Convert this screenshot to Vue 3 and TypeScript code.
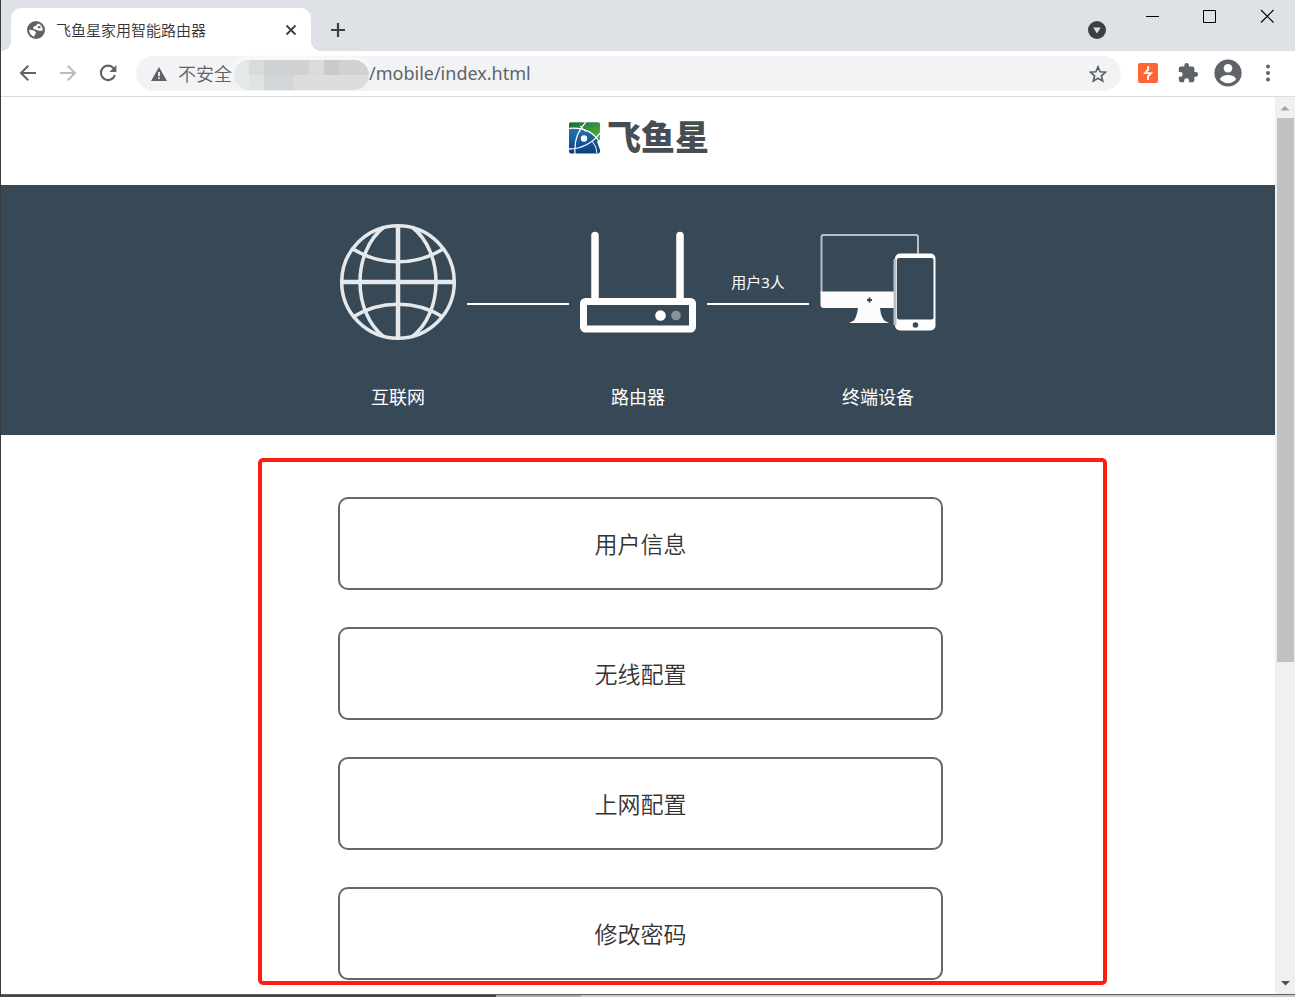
<script setup lang="ts">
import { ref } from 'vue'

const tabTitle = '飞鱼星家用智能路由器'
const address = ref('/mobile/index.html')
const onlineUsers = 3
const menu: string[] = ['用户信息', '无线配置', '上网配置', '修改密码']
</script>

<template>
  <div class="window">
    <header class="tabstrip">
      <div class="tab">
        <svg class="favicon" viewBox="0 0 18 18" aria-hidden="true">
          <circle cx="9" cy="9" r="9" fill="#5f6368" />
          <path d="M11.2 2.4C9.8 3.2 9.6 4.4 8.6 4.9 7.2 5.400 6 5.600 6.200 7.200 6.400 8.600 8.600 8 9.800 9 11.200 10.200 13.600 9.800 15.800 9.400 15.900 6.200 14.200 3.400 11.200 2.400Z" fill="#fff" />
          <path d="M2.200 8.800C4 8.900 6.800 9.200 8.200 10.400 9.800 11.800 8.400 13.200 7.600 13.800L7.400 15.700C4.200 15 2.200 12.200 2.200 8.800Z" fill="#fff" />
          <path d="M10.800 5.200H13.400V7.200H10.800Z" fill="#5f6368" />
        </svg>
        <span class="tab-title">{{ tabTitle }}</span>
        <button class="tab-close" type="button" aria-label="关闭标签页">
          <svg width="12" height="12" viewBox="0 0 12 12"><path d="M1.5 1.5 10.5 10.5M10.5 1.5 1.5 10.5" stroke="#3c4043" stroke-width="1.800" /></svg>
        </button>
      </div>
      <button class="new-tab" type="button" aria-label="新标签页">
        <svg width="16" height="16" viewBox="0 0 16 16"><path d="M8 1V15M1 8H15" stroke="#3c4043" stroke-width="2.2" /></svg>
      </button>
      <button class="tab-search" type="button" aria-label="搜索标签页">
        <svg width="18" height="18" viewBox="0 0 18 18"><circle cx="9" cy="9" r="9" fill="#3c4043" /><path d="M5.2 6.4H12.8L9 12.4Z" fill="#dee1e6" /></svg>
      </button>
      <div class="window-controls">
        <button type="button" aria-label="最小化">
          <svg width="14" height="14" viewBox="0 0 14 14"><path d="M0 7.5H13" stroke="#000" /></svg>
        </button>
        <button type="button" aria-label="最大化">
          <svg width="14" height="14" viewBox="0 0 14 14"><path d="M.5 1.5H12.5V13.5H.5Z" fill="none" stroke="#000" /></svg>
        </button>
        <button type="button" aria-label="关闭">
          <svg width="14" height="14" viewBox="0 0 14 14"><path d="M1 1 13.500 13.500M13.500 1 1 13.500" stroke="#000" stroke-width="1.1" /></svg>
        </button>
      </div>
    </header>

    <nav class="toolbar">
      <button class="tool" type="button" aria-label="后退">
        <svg width="18" height="18" viewBox="0 0 18 18"><path d="M17 9H2.5M9.3 1.8 2 9 9.3 16.2" fill="none" stroke="#5f6368" stroke-width="2" /></svg>
      </button>
      <button class="tool" type="button" aria-label="前进">
        <svg width="18" height="18" viewBox="0 0 18 18"><path d="M1 9H15.5M8.7 1.8 16 9 8.7 16.2" fill="none" stroke="#babcbe" stroke-width="2" /></svg>
      </button>
      <button class="tool" type="button" aria-label="重新加载">
        <svg width="18" height="18" viewBox="0 0 18 18"><path d="M15.9 11.2A7.2 7.2 0 1 1 14.6 4.2" fill="none" stroke="#5f6368" stroke-width="2.1" /><path d="M17.4 1V8H10.4Z" fill="#5f6368" /></svg>
      </button>
      <div class="omnibox">
        <button class="security" type="button">
          <svg width="16" height="14" viewBox="0 0 16 14"><path d="M8 0 16 14H0Z" fill="#5f6368" /><path d="M8 5V9.2M8 10.4V12" stroke="#fff" stroke-width="1.7" /></svg>
          <span>不安全</span>
        </button>
        <span class="redacted" aria-hidden="true"><i v-for="n in 18" :key="n"></i></span>
        <input v-model="address" class="address" type="text" aria-label="地址栏" />
        <button class="star" type="button" aria-label="收藏此页">
          <svg width="18" height="18" viewBox="0 0 18 18"><path d="M9 1.8 11.1 6.8 16.5 7.2 12.4 10.8 13.7 16 9 13.2 4.3 16 5.6 10.8 1.5 7.2 6.9 6.8Z" fill="none" stroke="#5f6368" stroke-width="1.7" /></svg>
        </button>
      </div>
      <div class="extensions">
        <button class="tool" type="button" aria-label="扩展">
          <svg width="22" height="22" viewBox="0 0 22 22"><rect x="1" y="1" width="20" height="20" rx="2" fill="#ff6633" /><path d="M11.200 4V7.400L8 11.200H14L10.900 14.600V18" fill="none" stroke="#fff" stroke-width="1.800" /></svg>
        </button>
        <button class="tool" type="button" aria-label="扩展程序">
          <svg width="22" height="22" viewBox="0 0 24 24"><path d="M20.5 11H19V7a2 2 0 0 0-2-2h-4V3.5a2.5 2.5 0 0 0-5 0V5H4a2 2 0 0 0-2 2v3.8h1.5a2.7 2.7 0 0 1 0 5.4H2V20a2 2 0 0 0 2 2h3.8v-1.5a2.7 2.7 0 0 1 5.4 0V22H17a2 2 0 0 0 2-2v-4h1.500a2.500 2.500 0 0 0 0-5Z" fill="#5f6368" /></svg>
        </button>
        <button class="tool" type="button" aria-label="个人资料">
          <svg width="28" height="28" viewBox="0 0 28 28"><circle cx="14" cy="14" r="13.6" fill="#5f6368" /><circle cx="14" cy="9.200" r="4.300" fill="#fff" /><path d="M5.800 20C7.600 16.900 11.200 16 14 16S20.400 16.900 22.200 20C20.400 22.600 17.400 24.200 14 24.200S7.600 22.600 5.800 20Z" fill="#fff" /></svg>
        </button>
        <button class="tool" type="button" aria-label="菜单">
          <svg width="6" height="18" viewBox="0 0 6 18"><g fill="#5f6368"><circle cx="3" cy="2.500" r="2" /><circle cx="3" cy="9" r="2" /><circle cx="3" cy="15.500" r="2" /></g></svg>
        </button>
      </div>
    </nav>

    <div class="viewport">
      <main class="page">
        <h1 class="brand">
          <svg width="32" height="32" viewBox="0 0 32 32" aria-hidden="true">
            <defs>
              <linearGradient id="sea" x1="0" y1="0" x2="0" y2="1"><stop offset="0" stop-color="#2d7fb4" /><stop offset="1" stop-color="#0a3f82" /></linearGradient>
              <linearGradient id="leaf" x1="0" y1="0" x2="1" y2="1"><stop offset="0" stop-color="#176b37" /><stop offset="1" stop-color="#5cbc40" /></linearGradient>
            </defs>
            <rect width="31" height="31" y="0.500" rx="2" fill="url(#sea)" />
            <path d="M1 .5H29a2 2 0 0 1 2 2V20C26 11 15 5 0 6.500V2Z" fill="url(#leaf)" />
            <path d="M28 19.500 31 18V28Z" fill="#fff" />
            <path d="M0 6.300C14 5 25 10 31 21" fill="none" stroke="#fff" stroke-width="1.300" />
            <path d="M17 0C9 8 5 19 6 32" fill="none" stroke="#fff" stroke-width="1.200" />
            <path d="M0 27C12 27 24 21 31 11" fill="none" stroke="#fff" stroke-width="1.300" />
            <path d="M11 4Q15 7 17 10M23 19Q28 25 28 31" fill="none" stroke="#fff" />
            <circle cx="15" cy="16.500" r="3.200" fill="#fff" />
          </svg>
          <span>飞鱼星</span>
        </h1>

        <section class="banner">
          <figure class="node">
            <svg width="120" height="120" viewBox="0 0 120 120" fill="none" stroke="#e6e9eb" stroke-width="3.500" aria-hidden="true">
              <circle cx="60" cy="60" r="56.300" />
              <path d="M60 3V117M3 60H117" stroke-width="4.500" />
              <path d="M46 5C14 30 14 90 46 115M74 5C106 30 106 90 74 115" />
              <path d="M15 27C42 44 78 44 105 27M15 95C42 78 78 78 105 95" />
            </svg>
            <figcaption>互联网</figcaption>
          </figure>
          <div class="link"></div>
          <figure class="node">
            <svg width="120" height="120" viewBox="0 0 120 120" aria-hidden="true">
              <path d="M17 78V13.500M102 78V13.500" stroke="#fff" stroke-width="7.500" stroke-linecap="round" />
              <rect x="5.500" y="79.500" width="109" height="27.500" rx="2" fill="#374956" stroke="#fff" stroke-width="7" />
              <circle cx="82.500" cy="93.500" r="5.300" fill="#fff" />
              <circle cx="98" cy="93.500" r="4.800" fill="#87929a" />
            </svg>
            <figcaption>路由器</figcaption>
          </figure>
          <div class="link"><span>用户{{ onlineUsers }}人</span></div>
          <figure class="node">
            <svg width="120" height="120" viewBox="0 0 120 120" aria-hidden="true">
              <path d="M3.500 72V15Q3.500 13 5.500 13H98Q100 13 100 15V32" fill="none" stroke="#b8c0c5" stroke-width="2" />
              <path d="M2.500 69.500H78V86H6Q2.500 86 2.500 82.500Z" fill="#fdfbfc" />
              <path d="M40 86H62Q63 96 67 99L71 101H31L36 98.500Q39 94 40 86Z" fill="#fdfbfc" />
              <path d="M49 78H54M51.500 75.500V80.500" stroke="#374956" stroke-width="2" />
              <rect x="77" y="31.500" width="40.500" height="77" rx="5" fill="#fff" />
              <path d="M77 37V103" stroke="#b8c0c5" stroke-width="3" />
              <rect x="79" y="36" width="36.500" height="61.500" rx="2" fill="#374956" />
              <circle cx="97.500" cy="103" r="2.800" fill="#374956" />
            </svg>
            <figcaption>终端设备</figcaption>
          </figure>
        </section>

        <div class="menu">
          <button v-for="item in menu" :key="item" class="menu-item" type="button">{{ item }}</button>
        </div>
      </main>

      <div class="scrollbar" aria-hidden="true">
        <svg width="20" height="20" viewBox="0 0 20 20"><path d="M5.500 13.500H14.500L10 9Z" fill="#a3a3a3" /></svg>
        <div class="rail"><div class="thumb"></div></div>
        <svg width="20" height="20" viewBox="0 0 20 20"><path d="M6 7H15L10.500 11.500Z" fill="#505050" /></svg>
      </div>
      <div class="highlight" aria-hidden="true"></div>
    </div>
    <div class="desktop-edge"></div>
  </div>
</template>

<style>
body {
  margin: 0;
  overflow: hidden;
}
</style>

<style scoped>
.window {
  display: flex;
  flex-direction: column;
  height: 100vh;
  box-sizing: border-box;
  border-left: 1px solid #3a3b3d;
  background: #fff;
  font-family: "Noto Sans", "Noto Sans CJK SC", sans-serif;
  color: #333;
}
button {
  display: flex;
  align-items: center;
  justify-content: center;
  padding: 0;
  border: 0;
  background: none;
  color: inherit;
  font-family: inherit;
}
svg {
  display: block;
  flex: none;
}
.tabstrip {
  display: flex;
  flex: none;
  height: 51px;
  background: #dee1e6;
}
.tab {
  position: relative;
  display: flex;
  align-items: center;
  box-sizing: border-box;
  width: 300px;
  margin: 8px 0 0 10px;
  padding: 0 10px 0 16px;
  border-radius: 10px 10px 0 0;
  background: #fff;
}
.tab::before,
.tab::after {
  content: "";
  position: absolute;
  bottom: 0;
  width: 10px;
  height: 10px;
}
.tab::before {
  right: 100%;
  background: radial-gradient(circle at 0 0, #dee1e6 10px, #fff 10px);
}
.tab::after {
  left: 100%;
  background: radial-gradient(circle at 100% 0, #dee1e6 10px, #fff 10px);
}
.favicon {
  width: 18px;
  height: 18px;
}
.tab-title {
  flex: 1;
  margin-left: 11px;
  font-family: "Noto Sans CJK SC", sans-serif;
  font-size: 15px;
  font-weight: 350;
  line-height: 20px;
  white-space: nowrap;
}
.tab-close {
  width: 20px;
  height: 20px;
}
.new-tab {
  width: 32px;
  margin: 8px 0 0 11px;
}
.tab-search {
  width: 36px;
  margin: 8px 9px 0 auto;
}
.window-controls {
  display: flex;
  height: 32px;
}
.window-controls button {
  width: 57px;
}
.toolbar {
  display: flex;
  flex: none;
  align-items: flex-start;
  box-sizing: border-box;
  height: 46px;
  padding: 5px 7px 0;
  border-bottom: 1px solid #dadce0;
}
.tool {
  width: 40px;
  height: 34px;
}
.omnibox {
  display: flex;
  flex: 1;
  align-items: center;
  height: 35px;
  margin: 0 7px 0 8px;
  border-radius: 18px;
  background: #f1f3f4;
}
.security {
  height: 34px;
  gap: 11px;
  padding-left: 15px;
  color: #5f6368;
  font-family: "Noto Sans CJK SC", sans-serif;
  font-size: 18px;
  font-weight: 350;
  line-height: 26px;
}
.security span {
  padding-bottom: 2px;
}
.redacted {
  display: grid;
  grid-template-columns: repeat(9, 15px);
  grid-template-rows: 15px 15px;
  overflow: hidden;
  margin: 2px 0 0 2px;
  border-radius: 15px;
  box-shadow: 0 -3px 3px 1px #f8f9f9;
}
.redacted i { background: #cfd1d3; }
.redacted i:nth-child(1) { background: #e6e7e8; }
.redacted i:nth-child(2) { background: #dadbdc; }
.redacted i:nth-child(6) { background: #dadbdd; }
.redacted i:nth-child(7) { background: #cbcaca; }
.redacted i:nth-child(10) { background: #e5e8e9; }
.redacted i:nth-child(11) { background: #e0e3e3; }
.redacted i:nth-child(12),
.redacted i:nth-child(13) { background: #d3d6d8; }
.redacted i:nth-child(n + 14) { background: #dcdddf; }
.address {
  flex: 1;
  min-width: 0;
  height: 30px;
  margin-bottom: 2px;
  padding: 0;
  border: 0;
  outline: 0;
  background: none;
  color: #5f6368;
  font-family: "Noto Sans", sans-serif;
  font-size: 18px;
}
.star {
  width: 46px;
  height: 34px;
}
.extensions {
  display: flex;
}
.viewport {
  position: relative;
  display: flex;
  flex: 1;
  min-height: 0;
}
.page {
  flex: 1;
  min-width: 0;
  overflow: hidden;
}
.brand {
  display: flex;
  align-items: center;
  justify-content: center;
  gap: 6px;
  box-sizing: border-box;
  height: 88px;
  margin: 0;
  padding: 0 0 7px 2px;
  color: #464e53;
  font-family: "Noto Sans CJK SC", sans-serif;
  font-size: 34px;
  font-weight: 900;
  line-height: 40px;
}
.brand span {
  padding-bottom: 4px;
}
.banner {
  display: flex;
  justify-content: center;
  box-sizing: border-box;
  height: 250px;
  padding-top: 37px;
  background: #374956;
  color: #fff;
}
.node {
  width: 120px;
  margin: 0;
}
.node figcaption {
  margin-top: 42px;
  font-size: 18px;
  line-height: 26px;
  text-align: center;
}
.link {
  display: flex;
  align-items: flex-end;
  justify-content: center;
  box-sizing: border-box;
  width: 102px;
  height: 83px;
  margin: 0 9px;
  padding-bottom: 10px;
  border-bottom: 2px solid #fff;
  font-size: 15px;
  line-height: 22px;
}
.menu {
  display: flex;
  flex-direction: column;
  gap: 37px;
  width: 605px;
  max-width: 100%;
  margin: 0 auto;
  padding: 62px 0 37px 5px;
}
.menu-item {
  height: 93px;
  flex: none;
  padding-bottom: 2px;
  border: 2px solid #666;
  border-radius: 10px;
  color: #333;
  font-size: 23px;
  font-weight: 350;
}
.scrollbar {
  display: flex;
  flex-direction: column;
  width: 20px;
  background: #f0f0f0;
}
.rail {
  flex: 1;
  padding: 1px 1px 0 2px;
}
.thumb {
  height: 63.5%;
  background: #c1c1c1;
}
.highlight {
  position: absolute;
  top: 361px;
  bottom: 9px;
  left: 50%;
  box-sizing: border-box;
  width: 849px;
  margin-left: -390px;
  border: 4px solid #fc1d13;
  border-radius: 5px;
  pointer-events: none;
}
.desktop-edge {
  flex: none;
  height: 2px;
  border-top: 1px solid #606060;
  background: linear-gradient(90deg, #444845 0 495px, #aaa 495px 580px, #ccc 580px);
}
</style>
